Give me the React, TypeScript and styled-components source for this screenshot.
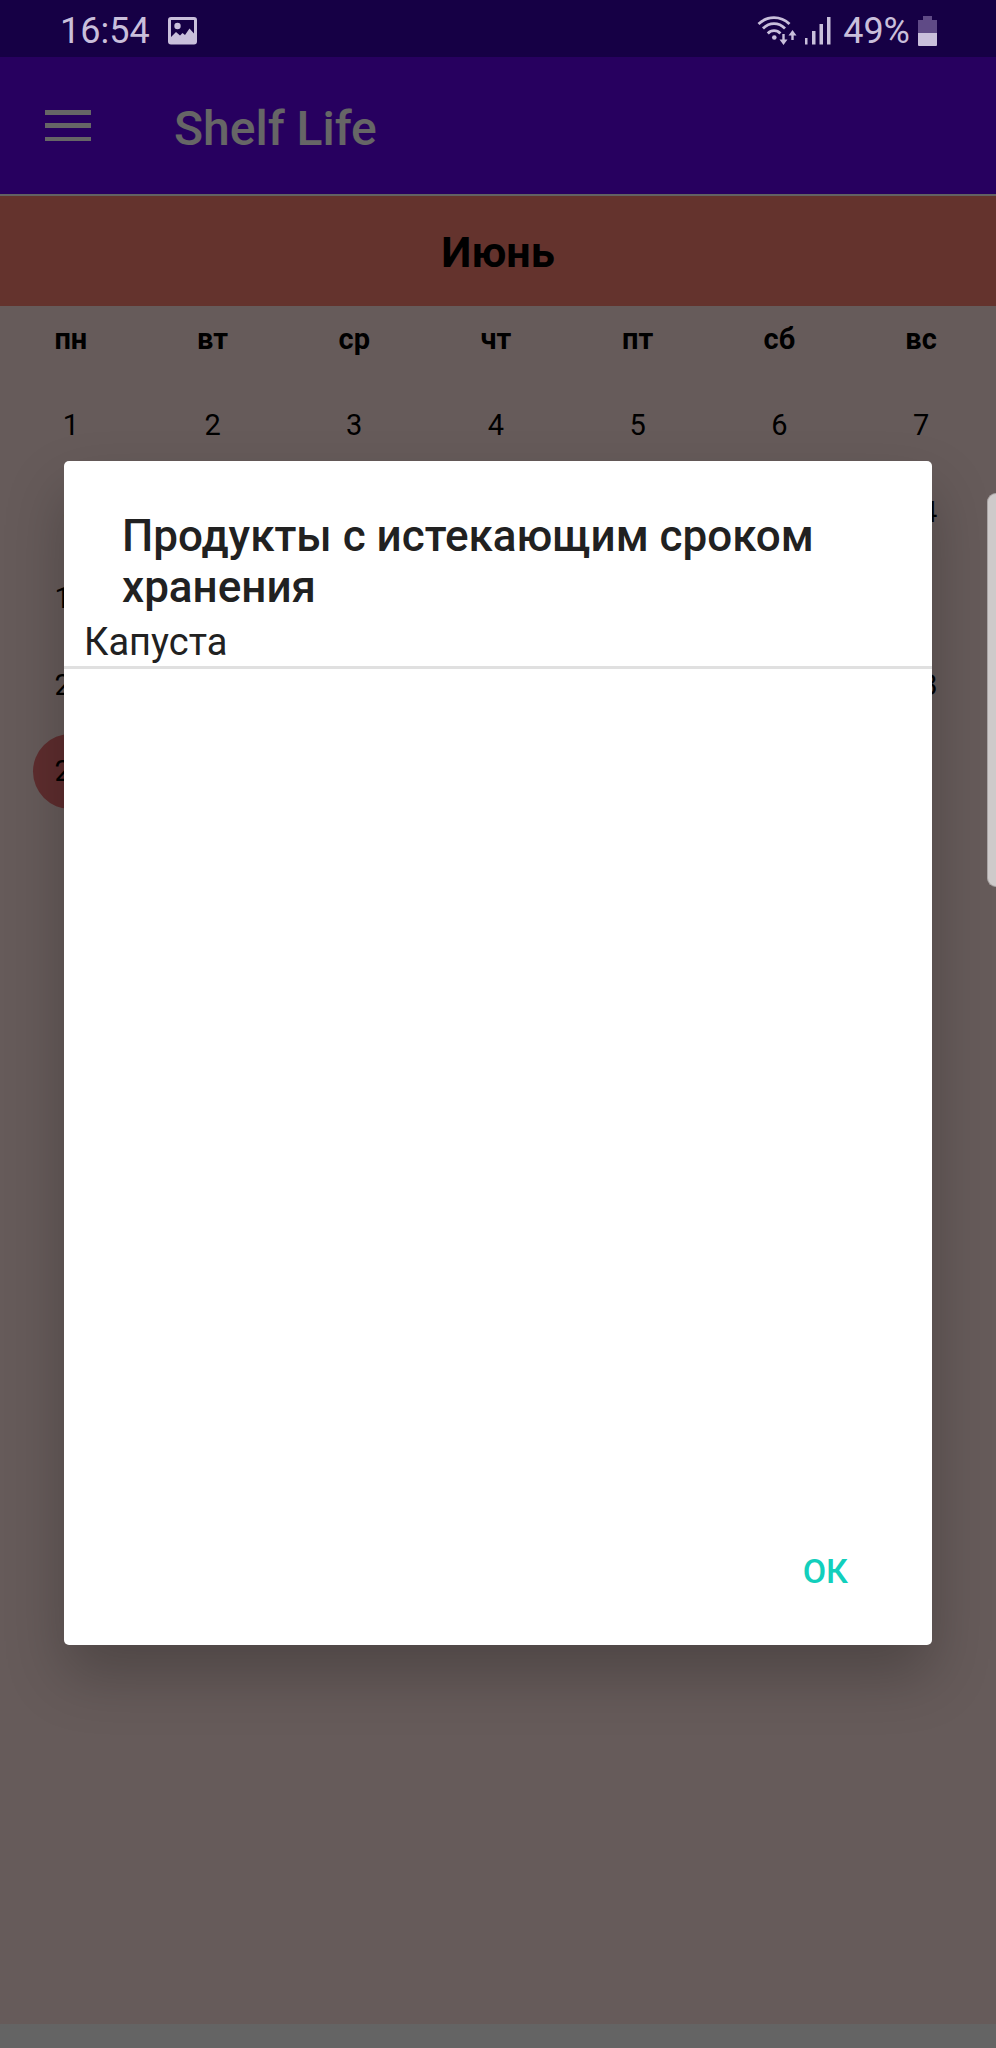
import React from "react";
import styled, { createGlobalStyle } from "styled-components";

const GlobalStyle = createGlobalStyle`
  * { box-sizing: border-box; }
  body {
    margin: 0;
    font-family: Roboto, "Noto Sans", sans-serif;
    background: #ffffff;
  }
`;

const STATUS_HEIGHT = "57px";

const Screen = styled.div`
  position: relative;
  display: flex;
  flex-direction: column;
  min-height: 100vh;
  overflow: hidden;
`;

const StatusBar = styled.header`
  position: relative;
  z-index: 2;
  display: flex;
  align-items: center;
  justify-content: space-between;
  height: ${STATUS_HEIGHT};
  padding: 4px 59px 0 60px;
  background: #160045;
  color: #c9bfdb;
  font-size: 36px;
  line-height: 44px;
`;

const StatusGroup = styled.div<{ $gap: number }>`
  display: flex;
  align-items: center;
  gap: ${({ $gap }) => $gap}px;
`;

const StatusIcon = styled.svg`
  display: block;
  flex: none;
`;

const AppBar = styled.nav`
  display: flex;
  align-items: center;
  height: 139px;
  padding: 0 44px;
  gap: 82px;
  background: #6200ee;
  border-bottom: 2px solid #f4f4f4;
  color: #ffffff;
`;

const MenuButton = styled.button`
  display: block;
  padding: 0;
  border: 0;
  background: none;
  color: inherit;
  svg { display: block; }
`;

const AppTitle = styled.h1`
  margin: 0;
  padding-top: 6px;
  font-size: 48px;
  font-weight: 500;
  line-height: 56px;
`;

const Calendar = styled.main`
  flex: 1;
  background: #ffe4e1;
`;

const Month = styled.h2`
  display: flex;
  align-items: center;
  justify-content: center;
  height: 110px;
  margin: 0;
  padding-top: 3px;
  background: #fa8072;
  font-size: 43px;
  font-weight: 700;
  line-height: 51px;
`;

const DaysArea = styled.div`
  padding-right: 4px;
`;

const Days = styled.table`
  width: 100%;
  table-layout: fixed;
  border-collapse: collapse;
  font-size: 29px;
  line-height: 36px;
  text-align: center;
`;

const Weekday = styled.th`
  height: 76px;
  padding: 0 0 11px;
  font-weight: 700;
`;

const Week = styled.tr`
  height: 86px;
  &:nth-child(even) { height: 87px; }
`;

const DayCell = styled.td`
  padding: 0;
`;

const DayNumber = styled.span<{ $marked: boolean }>`
  display: flex;
  align-items: center;
  justify-content: center;
  width: 75px;
  height: 75px;
  margin: 0 auto;
  border-radius: 50%;
  background: ${({ $marked }) => ($marked ? "#eb7073" : "transparent")};
`;

const NavigationBar = styled.footer`
  height: 24px;
  background: #fbfbfb;
`;

const Scrim = styled.div`
  position: absolute;
  inset: 0;
  display: flex;
  align-items: center;
  justify-content: center;
  padding: ${STATUS_HEIGHT} 64px 0;
  background: rgba(0, 0, 0, 0.6);
`;

const Dialog = styled.section`
  display: flex;
  flex-direction: column;
  flex: 1;
  border-radius: 5px;
  background: #ffffff;
  color: #212121;
  box-shadow: 0 30px 60px rgba(0, 0, 0, 0.24);
`;

const DialogTitle = styled.h2`
  margin: 0;
  padding: 50px 58px 8px;
  font-size: 44px;
  font-weight: 500;
  line-height: 51px;
`;

const Products = styled.ul`
  min-height: 860px;
  margin: 0;
  padding: 0;
  list-style: none;
`;

const Product = styled.li`
  padding: 0 20px 2px;
  border-bottom: 3px solid #e0e0e0;
  font-size: 38px;
  line-height: 43px;
`;

const Actions = styled.div`
  display: flex;
  justify-content: flex-end;
  padding: 26px 36px 10px;
`;

const ActionButton = styled.button`
  height: 128px;
  padding: 0 48px;
  border: 0;
  background: none;
  color: #12cfbc;
  font-family: inherit;
  font-size: 34px;
  font-weight: 500;
  line-height: 40px;
`;

const EdgeHandle = styled.div`
  position: absolute;
  z-index: 3;
  top: 493px;
  right: 0;
  width: 9px;
  height: 394px;
  border: 1px solid #aaa5a5;
  border-right: 0;
  border-radius: 10px 0 0 10px;
  background: #cecaca;
`;

const weekdays = ["пн", "вт", "ср", "чт", "пт", "сб", "вс"];
const daysInMonth = 30;
const markedDay = 29;
const products = ["Капуста"];

const weeks = Array.from({ length: Math.ceil(daysInMonth / 7) }, (_, week) =>
  weekdays.map((_, day) => week * 7 + day + 1)
);

const PictureIcon = () => (
  <StatusIcon width="29" height="28" viewBox="0 0 29 28" aria-hidden="true">
    <path
      fill="currentColor"
      fillRule="evenodd"
      d="M3 0h23a3 3 0 0 1 3 3v21.500a3 3 0 0 1-3 3H3a3 3 0 0 1-3-3V3a3 3 0 0 1 3-3ZM3 3v17l5-5 4 3.500 2.500-2.500L17 18l4.500-6.500 4.500 5V3Z"
    />
    <circle cx="9.500" cy="9" r="3.200" fill="currentColor" />
  </StatusIcon>
);

const WifiIcon = () => (
  <StatusIcon width="40" height="31" viewBox="0 0 40 31" fill="none" stroke="currentColor" aria-hidden="true">
    <path strokeWidth="2.800" d="M1.500 9C10.500.500 23.500.500 32.500 9M6 13.500c6.500-6.500 15.500-6.500 22 0M10.800 18.500c3.500-3.800 9-3.800 12.600 0" />
    <circle cx="17.300" cy="22.500" r="2.300" fill="currentColor" stroke="none" />
    <path strokeWidth="2.400" d="M26.500 19v8M35.500 25v-8" />
    <path fill="currentColor" stroke="none" d="M22.500 24.500h8l-4 5.500ZM31.500 20.500h8l-4-5.500Z" />
  </StatusIcon>
);

const SignalIcon = () => (
  <StatusIcon width="26" height="28" viewBox="0 0 26 28" fill="currentColor" aria-hidden="true">
    <path d="M0 21h2.500v6.500H0ZM7 14h3.500v13.500H7ZM14.500 7H18v20.500h-3.500ZM22 0h3.500v27.500H22Z" />
  </StatusIcon>
);

const BatteryIcon = () => (
  <StatusIcon width="19" height="30" viewBox="0 0 19 30" aria-hidden="true">
    <path fill="#5f4a86" d="M5 0h9v4h5v13H0V4h5Z" />
    <path fill="currentColor" d="M0 17h19v12a1 1 0 0 1-1 1H1a1 1 0 0 1-1-1Z" />
  </StatusIcon>
);

export default function App() {
  return (
    <Screen>
      <GlobalStyle />
      <StatusBar>
        <StatusGroup $gap={18}>
          <span>16:54</span>
          <PictureIcon />
        </StatusGroup>
        <StatusGroup $gap={12}>
          <StatusGroup $gap={8}>
            <WifiIcon />
            <SignalIcon />
          </StatusGroup>
          <StatusGroup $gap={8}>
            <span>49%</span>
            <BatteryIcon />
          </StatusGroup>
        </StatusGroup>
      </StatusBar>
      <AppBar>
        <MenuButton type="button" aria-label="Меню">
          <svg width="48" height="32" viewBox="0 0 48 32" fill="currentColor" aria-hidden="true">
            <path d="M1 0h46v5H1ZM1 13h46v5H1ZM1 27h46v4H1Z" />
          </svg>
        </MenuButton>
        <AppTitle>Shelf Life</AppTitle>
      </AppBar>
      <Calendar>
        <Month>Июнь</Month>
        <DaysArea>
          <Days>
            <thead>
              <tr>
                {weekdays.map((name) => (
                  <Weekday key={name} scope="col">{name}</Weekday>
                ))}
              </tr>
            </thead>
            <tbody>
              {weeks.map((week) => (
                <Week key={week[0]}>
                  {week.map((day) => (
                    <DayCell key={day}>
                      {day <= daysInMonth && (
                        <DayNumber $marked={day === markedDay}>{day}</DayNumber>
                      )}
                    </DayCell>
                  ))}
                </Week>
              ))}
            </tbody>
          </Days>
        </DaysArea>
      </Calendar>
      <NavigationBar />
      <Scrim>
        <Dialog role="dialog" aria-modal="true" aria-labelledby="dialog-title">
          <DialogTitle id="dialog-title">Продукты с истекающим сроком хранения</DialogTitle>
          <Products>
            {products.map((name) => (
              <Product key={name}>{name}</Product>
            ))}
          </Products>
          <Actions>
            <ActionButton type="button">ОК</ActionButton>
          </Actions>
        </Dialog>
      </Scrim>
      <EdgeHandle />
    </Screen>
  );
}
